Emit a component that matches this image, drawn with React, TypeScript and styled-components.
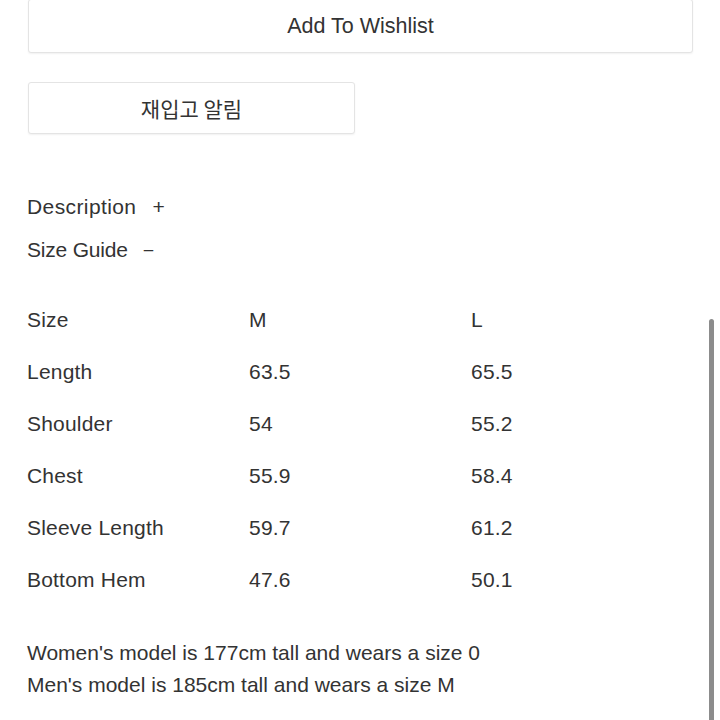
import React from "react";
import styled, { createGlobalStyle } from "styled-components";

const Global = createGlobalStyle`
  html, body { margin: 0; padding: 0; background: #ffffff; }
  body {
    font-family: "Liberation Sans", Arial, "Noto Sans CJK KR", sans-serif;
    color: #333333;
    overflow: hidden;
  }
`;

const Page = styled.div`
  position: relative;
  width: 720px;
  height: 720px;
  overflow: hidden;
  box-sizing: border-box;
  padding: 0 28px 0 27px;
  display: flex;
  flex-direction: column;
`;

const Button = styled.button<{ $w: string; $h: number }>`
  width: ${(p) => p.$w};
  height: ${(p) => p.$h}px;
  margin-left: 1px;
  box-sizing: border-box;
  background: #ffffff;
  border: 1px solid #e4e4e4;
  border-radius: 3px;
  box-shadow: 0 1px 2px rgba(0, 0, 0, 0.06);
  font-family: "Liberation Sans", Arial, "Noto Sans CJK KR", sans-serif;
  font-size: 21px;
  color: #333333;
  display: flex;
  align-items: center;
  justify-content: center;
  padding: 0;
`;

const WishButton = styled(Button)`
  margin-top: -1px;
  font-size: 21.5px;
`;

const RestockButton = styled(Button)`
  margin-top: 29px;
  font-family: "Noto Sans CJK KR", sans-serif;
  font-size: 21px;
`;

const Accordion = styled.div`
  margin-top: 51px;
  display: flex;
  flex-direction: column;
`;

const AccordionRow = styled.div<{ $spacing: number }>`
  height: 43px;
  display: flex;
  align-items: center;
  font-size: 21px;
  letter-spacing: ${(p) => p.$spacing}px;
`;

const Sign = styled.span<{ $size: number }>`
  margin-left: 16px;
  font-size: ${(p) => p.$size}px;
  letter-spacing: 0;
`;

const Table = styled.div`
  margin-top: 23px;
  display: grid;
  grid-template-columns: 222px 222px 1fr;
`;

const Cell = styled.div`
  height: 52px;
  display: flex;
  align-items: center;
  font-size: 21px;
  letter-spacing: 0.2px;
`;

const Notes = styled.div`
  margin-top: 31px;
  display: flex;
  flex-direction: column;
`;

const NoteLine = styled.div`
  height: 32px;
  line-height: 32px;
  font-size: 21px;
`;

const ScrollThumb = styled.div`
  position: absolute;
  left: 709px;
  top: 319px;
  width: 5px;
  height: 420px;
  border-radius: 3px;
  background: #8c8c8c;
`;

const rows: [string, string, string][] = [
  ["Size", "M", "L"],
  ["Length", "63.5", "65.5"],
  ["Shoulder", "54", "55.2"],
  ["Chest", "55.9", "58.4"],
  ["Sleeve Length", "59.7", "61.2"],
  ["Bottom Hem", "47.6", "50.1"],
];

export default function App() {
  return (
    <>
      <Global />
      <Page>
        <WishButton $w="665px" $h={54}>Add To Wishlist</WishButton>
        <RestockButton $w="327px" $h={52}>재입고 알림</RestockButton>
        <Accordion>
          <AccordionRow $spacing={0.4}>
            Description<Sign $size={21}>+</Sign>
          </AccordionRow>
          <AccordionRow $spacing={-0.2}>
            Size Guide<Sign $size={17}>–</Sign>
          </AccordionRow>
        </Accordion>
        <Table>
          {rows.map((r) =>
            r.map((c, i) => <Cell key={r[0] + i}>{c}</Cell>)
          )}
        </Table>
        <Notes>
          <NoteLine>Women's model is 177cm tall and wears a size 0</NoteLine>
          <NoteLine>Men's model is 185cm tall and wears a size M</NoteLine>
        </Notes>
        <ScrollThumb />
      </Page>
    </>
  );
}
